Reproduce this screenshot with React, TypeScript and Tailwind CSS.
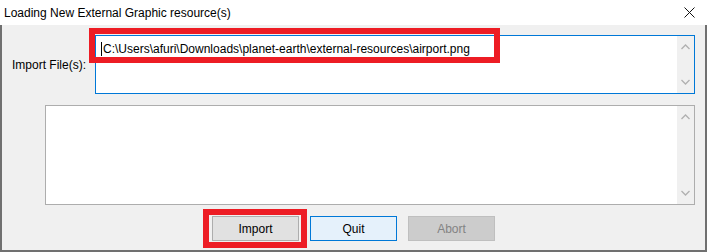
import * as React from "react";

const font = { fontFamily: '"Segoe UI", "Liberation Sans", Arial, sans-serif' };

function ScrollStrip() {
  return (
    <div className="flex w-[17px] flex-col items-center justify-between self-stretch bg-[#f0f0f0] py-[8px]">
      <svg width="9" height="6" viewBox="0 0 9 6" className="text-[#b0b0b0]">
        <path d="M0.5 5 L4.5 1 L8.5 5" fill="none" stroke="currentColor" strokeWidth="1.3" />
      </svg>
      <svg width="9" height="6" viewBox="0 0 9 6" className="text-[#b0b0b0]">
        <path d="M0.5 1 L4.5 5 L8.5 1" fill="none" stroke="currentColor" strokeWidth="1.3" />
      </svg>
    </div>
  );
}

export default function App() {
  const path =
    "C:\\Users\\afuri\\Downloads\\planet-earth\\external-resources\\airport.png";

  return (
    <div className="relative h-[252px] w-[707px] overflow-hidden bg-white text-[12px] text-black" style={font}>
      {/* title bar */}
      <div className="flex h-[25px] items-center justify-between pl-[4px] pr-[12px]">
        <span className="leading-none">Loading New External Graphic resource(s)</span>
        <svg width="11" height="11" viewBox="0 0 11 11">
          <path d="M0.5 0.5 L10.5 10.5 M10.5 0.5 L0.5 10.5" stroke="#111" strokeWidth="1" />
        </svg>
      </div>

      {/* client area */}
      <div className="flex h-[227px] w-[707px] flex-col border-b-2 border-l-2 border-r-2 border-[#707070] bg-[#f0f0f0]">
        <div className="mt-[10px] flex items-center">
          <span className="ml-[10px] w-[83px]">Import File(s):</span>
          <div className="relative flex h-[59px] w-[600px] border border-[#0078d7] bg-white">
            <div className="flex-1 pl-[5px] pt-[4px]">
              <span className="border-l border-black pl-px leading-[17px]">{path}</span>
            </div>
            <ScrollStrip />
          </div>
        </div>

        <div className="ml-[43px] mt-[11px] flex h-[100px] w-[650px] border border-[#adadad] bg-white">
          <div className="flex-1" />
          <ScrollStrip />
        </div>

        <div className="ml-[210px] mt-[11px] flex gap-[11px]">
          <button className="h-[25px] w-[87px] border border-[#adadad] bg-[#e1e1e1]">Import</button>
          <button className="h-[25px] w-[87px] border border-[#0078d7] bg-[#e5f1fb]">Quit</button>
          <button className="h-[25px] w-[87px] border border-[#bfbfbf] bg-[#cccccc] text-[#838383]">Abort</button>
        </div>
      </div>

      {/* red annotation boxes */}
      <div className="pointer-events-none absolute left-[89px] top-[28px] h-[35px] w-[411px] border-[6px] border-[#ed1c24]" />
      <div className="pointer-events-none absolute left-[203px] top-[209px] h-[39px] w-[104px] border-[6px] border-[#ed1c24]" />
    </div>
  );
}
